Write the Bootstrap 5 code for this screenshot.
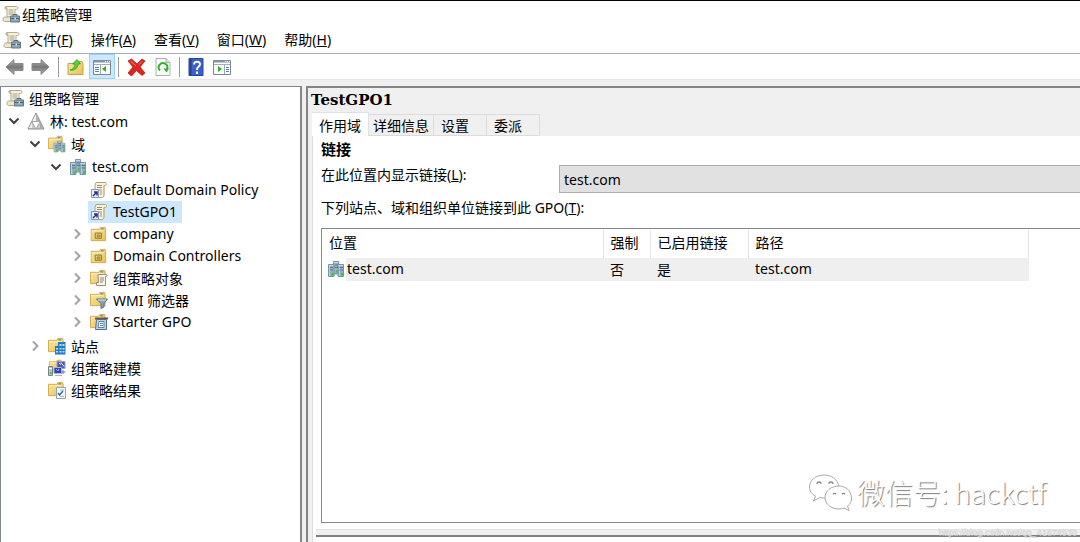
<!DOCTYPE html>
<html lang="zh-CN">
<head>
<meta charset="utf-8">
<meta name="viewport" content="width=device-width, initial-scale=1">
<title>组策略管理</title>
<link href="https://cdn.jsdelivr.net/npm/bootstrap@5.3.0/dist/css/bootstrap.min.css" rel="stylesheet">
<style>
  body { font-family: "Noto Sans", "Noto Sans CJK SC", sans-serif; font-size: 14px; line-height: 22px; color: #000; background: #f0f0f0; }
  .han { font-size: 14px; font-family: "Noto Sans CJK SC", sans-serif; }
  svg { display: block; flex: none; }
  .titlebar { border-top: 1px solid #000; height: 26px; padding-left: 2px; gap: 2px; }
  .menubar { height: 27px; padding-left: 3px; }
  .menubar .btn, .tools .btn, .twist { border: 0; border-radius: 0; padding: 0; color: #000; background: none; font-size: inherit; line-height: inherit; }
  .menubar .menus { gap: 18px; margin-left: 8px; }
  .tools { height: 27px; border-top: 1px solid #a3abb8; border-bottom: 1px solid #e6e6e6; padding-left: 5px; gap: 8px; }
  .tools .btn.pressed { background: #cce8ff; border: 1px solid #99d1ff; width: 26px; height: 25px; display: grid; place-items: center; }
  .toolset { gap: 5px; }
  .toolset.tight { gap: 3px; }
  .toolset.loose { gap: 9px; }
  .sep { width: 1px; height: 20px; background: #999; }
  .workspace { padding-top: 6px; }
  .treepane { flex: 0 0 302px; background: #fff; border: 1px solid #828790; border-width: 1px 2px 0 1px; padding-left: 5px; }
  .treepane ul { list-style: none; margin: 0; padding: 0; }
  .treepane ul ul { padding: 1px 0; }
  .treepane ul ul ul { margin-left: 21px; }
  .treerow { height: 22px; }
  .twist { flex: 0 0 21px; height: 22px; padding-left: 2px; }
  .node { height: 22px; gap: 5px; padding-right: 5px; color: #000; text-decoration: none; white-space: nowrap; }
  .node.chosen { background: #cce8ff; margin-left: -2px; padding-left: 2px; }
  .detail { margin-left: 4px; border: 2px solid #848484; border-width: 2px 0 0 2px; padding-left: 4px; }
  .gpo-name { font: bold 15px/24px "DejaVu Serif", serif; margin: 0 0 0 -1px; }
  .gpotabs { border: 0; align-items: flex-end; }
  .gpotabs .nav-link { border: 1px solid #dcdcdc; border-left: 0; border-radius: 0; background: #f0f0f0; color: #000; padding: 0 4px; height: 22px; line-height: 20px; min-width: 53px; text-align: left; margin: 0; }
  .gpotabs .nav-link.short { padding: 0 7px; }
  .gpotabs .nav-link.active { background: #fff; height: 24px; color: #000; border-bottom: 0; padding: 0 7px; }
  .page { background: #fff; border-left: 1px solid #dcdcdc; padding: 2px 0 6px 8px; }
  .page h2 { font-size: 15px; line-height: 22px; margin: 0; font-weight: 700; }
  .where { width: 238px; height: 28px; line-height: 28px; }
  .form-select.pick { background: #e1e1e1; border: 1px solid #adadad; border-right: 0; border-radius: 0; color: #000; height: 28px; padding: 0 4px; font-size: 14px; margin-top: 5px; }
  .caption-line { padding: 3px 0 9px; }
  .linkbox { border: 1px solid #828790; border-right: 0; }
  .links { width: 707px; table-layout: fixed; margin: 1px 0 0; color: #000; --bs-table-bg: transparent; }
  .links th, .links td { padding: 0 0 0 7px; border: 0; font-weight: 400; }
  .links th { height: 28px; border-right: 1px solid #e5e5e5; line-height: 22px; padding-bottom: 4px; vertical-align: middle; }
  .links td { height: 23px; background: #efefef; line-height: 22px; }
  .links td:first-child { padding-left: 5px; background: linear-gradient(90deg, #fff 24px, #efefef 24px); }
  .sitecell { gap: 2px; }
  .splitter { height: 13px; background: #fff; border-left: 1px solid #dcdcdc; }
  .splitter i { display: block; height: 8px; background: #f0f0f0; border-top: 1px solid #e3e3e3; border-bottom: 2px solid #808080; margin-left: 3px; }
  .wechat { position: absolute; right: 34px; bottom: 30px; gap: 5px; color: #fff; font: 300 28px/40px "Noto Sans CJK SC", sans-serif; text-shadow: 1px 1px 1px #777; pointer-events: none; }
  .source { position: absolute; right: 4px; bottom: 2px; font: 9px/16px "Liberation Sans", sans-serif; color: #ddd; text-shadow: 1px 1px 0 #d0d0d0; pointer-events: none; }
</style>
</head>
<body>
<svg width="0" height="0" class="position-absolute" aria-hidden="true">
  <defs>
    <linearGradient id="gGold" x1="0" y1="0" x2="1" y2="1"><stop offset="0" stop-color="#fce9a3"/><stop offset="1" stop-color="#e9bf55"/></linearGradient>
    <linearGradient id="gGrey" x1="0" y1="0" x2="0" y2="1"><stop offset="0" stop-color="#b5b5b5"/><stop offset=".5" stop-color="#777"/><stop offset="1" stop-color="#b0b0b0"/></linearGradient>
    <symbol id="scroll" viewBox="0 0 18 18">
      <path d="M4 1.500h10.500c2 0 2 3 0 3h-1.500V12H5V4z" fill="#f7f1dc" stroke="#b5aa90"/>
      <path d="M4 1.500C2.500 2 2.500 4.500 5 4.500" fill="#d9cca8" stroke="#a79a7c"/>
      <path d="M6.500 5h5M6.500 7h5M6.500 9h5" stroke="#a39e8d"/>
      <path d="M2.500 12H11v4.500H2.500c-2 0-2-4.500 0-4.500z" fill="#efe6cb" stroke="#b5aa90"/>
    </symbol>
    <symbol id="gpm" viewBox="0 0 18 18">
      <use href="#scroll"/>
      <path d="M11 11V9.500h4V11" fill="none" stroke="#566978"/>
      <path d="M8.500 11h9v6h-9z" fill="#8fa5b5" stroke="#61788a"/><path d="M9 13.500h8" stroke="#4c6272"/><path d="M12.500 12.500h1.500v2h-1.500z" fill="#d7e2e9"/>
    </symbol>
    <symbol id="gpolink" viewBox="0 0 18 18">
      <path d="M6 1.500h9c2 0 2 3 0 3h-1V14c0 1.500-1 2.500-2 2.500H5V4z" fill="#faf4df" stroke="#b0a279"/>
      <path d="M14 4.500V14" stroke="#cdbf94"/><path d="M7 4.500h5M7 6.500h5M9 9h3M10 11h2M10 13h2" stroke="#948c75"/>
      <path d="M1.500 8.500h7v8h-7z" fill="#eef0fb" stroke="#8d91b8"/><path d="M3 15l3.500-3.500M4 11h3v3.500" fill="none" stroke="#24308e" stroke-width="1.500"/>
    </symbol>
    <symbol id="forest" viewBox="0 0 18 18">
      <path d="M9 1l8 16H1z" fill="#c9c9c9" stroke="#8f8f8f"/><path d="M9 2.500V9H5.500z" fill="#f4f4f4"/><path d="M9 2.500L12.500 9H9z" fill="#b0b0b0"/>
      <path d="M5 9.500h8L9 17z" fill="#fff" stroke="#999" stroke-width=".8"/><path d="M5 10.500v5.500H2z" fill="#efefef"/><path d="M13 10.500l3 5.500h-3z" fill="#aaa"/>
    </symbol>
    <symbol id="folder" viewBox="0 0 18 18">
      <path d="M.5 3.500h9l1-2h5l.5 2v12H.5z" fill="url(#gGold)" stroke="#d3a84a"/><path d="M11 3h3" stroke="#6f8eaa" stroke-width="1.500"/><path d="M1.500 5h13" stroke="#fff3c5"/>
    </symbol>
    <symbol id="servers" viewBox="0 0 18 18">
      <g stroke="#7893a6" fill="#94b1c5"><path d="M6.500 1.500h5V14h-5z"/><path d="M1.500 4.500H7v12H1.500z"/><path d="M11 4.500h5.500v12H11z"/></g>
      <path d="M2 5.500h4M11.500 5.500H16M7 2.500h4" stroke="#c5dae6"/>
      <path d="M2.500 5v11M12.500 5v11" stroke="#b8d0df"/>
      <path d="M3 7.500h3M3 10h3M12.500 7.500H16M12.500 10H16M8 5h3M8 7.500h3" stroke="#57758a"/>
      <path d="M4.500 13h2v2.500h-2zM14 13h2v2.500h-2zM9 10.500h1.500v2H9z" fill="#30ca26"/>
    </symbol>
    <symbol id="domains" viewBox="0 0 18 18"><use href="#folder" width="16" height="16"/><use href="#servers" x="5" y="5" width="13" height="13"/></symbol>
    <symbol id="ou" viewBox="0 0 18 18"><use href="#folder"/><path d="M5 7.500h6.500v5.500H5z" fill="#efd37c" stroke="#8d7028"/><path d="M7 9.500h3v2H7z" fill="#e2bd59" stroke="#8d7028" stroke-width=".8"/></symbol>
    <symbol id="gpofolder" viewBox="0 0 18 18"><use href="#folder" width="17" height="17"/><path d="M8 5.500h8c1.500 0 1.500 2 0 2h-.5V16.500H6.500v-3h2z" fill="#f8f4e5" stroke="#9c917a"/><path d="M10 9h4M10 11h4M10 13h3" stroke="#8d8877"/></symbol>
    <symbol id="wmi" viewBox="0 0 18 18"><use href="#folder" width="17" height="17"/><path d="M6.500 8h11L14 12.500V16l-3 1.500v-5z" fill="#8ba5b7" stroke="#587285"/><path d="M8 9h8" stroke="#dbe7ef"/></symbol>
    <symbol id="starter" viewBox="0 0 18 18"><use href="#folder" width="17" height="17"/><path d="M5 5.500h13" stroke="#7b4937" stroke-width="2"/><path d="M6.500 6.500h10v10H5.500z" fill="#b8d5ed" stroke="#50728f"/><path d="M9 8.500h5v6H8z" fill="#f5fafd" stroke="#67839b"/><path d="M10 10.500h3M10 12.500h3" stroke="#5687ae"/></symbol>
    <symbol id="sites" viewBox="0 0 18 18"><use href="#folder" width="17" height="17"/><path d="M10 5h7.500v12.500H7V9h3z" fill="#1d7cc4"/><path d="M11.500 7h2v2h-2zM14.500 7h2v2h-2zM8 11h2v1.500H8zM11.500 11h2v1.500h-2zM14.500 11h2v1.500h-2zM8 14h2v1.500H8zM11.500 14h2v1.500h-2zM14.500 14h2v1.500h-2z" fill="#b9e3fa"/></symbol>
    <symbol id="modeling" viewBox="0 0 18 18"><use href="#folder" x="1" width="14" height="14"/><path d="M9 2.500h8v7H9z" fill="#4856be" stroke="#9ba1b8"/><path d="M11 4l2 1.500M13 3.500l3 4" stroke="#fff"/><path d="M.5 7.500h4v9h-4z" fill="#bdc5c9" stroke="#788187"/><path d="M1 9.500h3" stroke="#fff"/><path d="M2 13h1.500v2H2z" fill="#28c62c"/><path d="M6 8.500h7.500v6H6z" fill="#2941bd" stroke="#b0b5c5"/><path d="M8 10l2 2 1-2M7 16.500h7" stroke="#a8b4d6" fill="none"/><path d="M15 11v4M13.500 13h4" stroke="#687699"/></symbol>
    <symbol id="results" viewBox="0 0 18 18"><use href="#folder" width="17" height="17"/><path d="M8.500 6.500h9v11h-9z" fill="#f7fafc" stroke="#92a1ad"/><path d="M12 9h4M12 15.500h4" stroke="#a4b2bf"/><path d="M10 12l1.500 2 3.500-4" fill="none" stroke="#2f6eb0" stroke-width="1.500"/></symbol>
    <symbol id="down" viewBox="0 0 12 12"><path d="M1.500 3.500L6 8l4.500-4.500" fill="none" stroke="#404040" stroke-width="2"/></symbol>
    <symbol id="right" viewBox="0 0 12 12"><path d="M4 1.500L8.500 6 4 10.500" fill="none" stroke="#a3a3a3" stroke-width="2"/></symbol>
    <symbol id="arrow" viewBox="0 0 20 18"><path d="M1 9l8-7.500V5.500h9v7H9v4z" fill="url(#gGrey)" stroke="#8b8b8b"/></symbol>
    <symbol id="panel" viewBox="0 0 18 16"><path d="M.5 1.500h17v14H.5z" fill="#fafcfd" stroke="#7b8792"/><path d="M1 2.500h16" stroke="#8696a5" stroke-width="2"/><path d="M12 2.500h1M14 2.500h1M16 2.500h1" stroke="#fff"/><path d="M1 5.500h16" stroke="#a4afb9"/></symbol>
  </defs>
</svg>

<div class="d-flex flex-column vh-100 overflow-hidden position-relative">
  <header class="bg-white">
    <div class="titlebar d-flex align-items-center"><svg width="18" height="18"><use href="#gpm"/></svg><span class="han">组策略管理</span></div>
    <nav class="menubar d-flex align-items-center" aria-label="菜单">
      <svg width="18" height="18"><use href="#gpm"/></svg>
      <div class="menus d-flex">
        <button class="btn" type="button"><span class="han">文件</span>(<u>F</u>)</button>
        <button class="btn" type="button"><span class="han">操作</span>(<u>A</u>)</button>
        <button class="btn" type="button"><span class="han">查看</span>(<u>V</u>)</button>
        <button class="btn" type="button"><span class="han">窗口</span>(<u>W</u>)</button>
        <button class="btn" type="button"><span class="han">帮助</span>(<u>H</u>)</button>
      </div>
    </nav>
    <div class="tools d-flex align-items-center" role="toolbar" aria-label="工具栏">
      <div class="toolset d-flex align-items-center">
        <button class="btn" type="button" aria-label="后退"><svg width="20" height="18"><use href="#arrow"/></svg></button>
        <button class="btn" type="button" aria-label="前进"><svg width="20" height="18" viewBox="0 0 20 18"><path d="M19 9l-8-7.500V5.500H2v7h9v4z" fill="url(#gGrey)" stroke="#8b8b8b"/></svg></button>
      </div>
      <span class="sep"></span>
      <div class="toolset d-flex align-items-center">
        <button class="btn" type="button" aria-label="上移一级"><svg width="17" height="18" viewBox="0 0 16 18"><path d="M.5 5.500h8l1-2h5l1 2v11H.5z" fill="url(#gGold)" stroke="#c8a047"/><path d="M2.500 12C5 11.500 7 10 7.500 6H5l4.500-4.500L13 6h-2.500c0 4-3.500 7-8 6z" fill="#54d53b" stroke="#2c9e20" stroke-width=".8"/></svg></button>
        <div class="toolset tight d-flex align-items-center">
          <button class="btn pressed" type="button" aria-label="控制台树"><svg width="18" height="16" viewBox="0 0 18 16"><use href="#panel"/><path d="M7.500 6v9" stroke="#9ba8b3"/><path d="M2 8.500h4M2 10.500h4M2 12.500h4" stroke="#5b7fae"/><path d="M13 7v6l-4-3z" fill="#35ad24"/></svg></button>
          <span class="sep"></span>
        </div>
      </div>
      <div class="toolset loose d-flex align-items-center">
        <button class="btn" type="button" aria-label="删除"><svg width="19" height="18" viewBox="0 0 19 18"><path d="M1 3l3.500-2L10 6l5-5 3 2-5 6 5 6-3 2.500-5.500-5-5 5.500L1 15l5-6z" fill="#e2241f" stroke="#b91813" stroke-width=".8"/><path d="M3.500 3L9 8M15 3.500l-3 3" stroke="#ff817b"/></svg></button>
        <button class="btn" type="button" aria-label="刷新"><svg width="16" height="18" viewBox="0 0 16 18"><path d="M1 .5h10l4 4v13H1z" fill="#f8fafa" stroke="#a9b1b6"/><path d="M11 .5v4h4" fill="#dce2e5" stroke="#a9b1b6"/><path d="M5 12.500A4.300 4.300 0 1 1 12 11" fill="none" stroke="#32b32c" stroke-width="2"/><path d="M8.500 10.500H14l-2.500 4z" fill="#32b32c"/></svg></button>
      </div>
      <span class="sep"></span>
      <div class="toolset loose d-flex align-items-center">
        <button class="btn" type="button" aria-label="帮助"><svg width="16" height="18" viewBox="0 0 15 18"><path d="M.5.500h14v17H.5z" fill="#3b62c4" stroke="#2547a0"/><path d="M1 1h2v16H1z" fill="#243f92"/><path d="M5.500 6.500C5.500 2.500 12 3 11.500 6.500 11 9 8.500 8.500 8.500 12M8.500 13.500V16" fill="none" stroke="#fff" stroke-width="1.900"/></svg></button>
        <button class="btn" type="button" aria-label="操作窗格"><svg width="18" height="16" viewBox="0 0 18 16"><use href="#panel"/><path d="M11.500 6v9" stroke="#9ba8b3"/><path d="M13 8.500h3M13 10.500h3M13 12.500h3" stroke="#5b7fae"/><path d="M5 7v6l4-3z" fill="#35ad24"/></svg></button>
      </div>
    </div>
  </header>

  <main class="workspace d-flex flex-grow-1">
    <nav class="treepane" aria-label="控制台树">
      <ul>
        <li><div class="treerow d-flex"><a class="node d-flex align-items-center" href="#root"><svg width="18" height="18"><use href="#gpm"/></svg><span class="han">组策略管理</span></a></div>
          <ul>
            <li><div class="treerow d-flex"><button class="twist" type="button" aria-label="折叠"><svg width="12" height="12"><use href="#down"/></svg></button><a class="node d-flex align-items-center" href="#forest-node"><svg width="18" height="18"><use href="#forest"/></svg><span><span class="han">林</span>: test.com</span></a></div>
              <ul>
                <li><div class="treerow d-flex"><button class="twist" type="button" aria-label="折叠"><svg width="12" height="12"><use href="#down"/></svg></button><a class="node d-flex align-items-center" href="#d"><svg width="18" height="18"><use href="#domains"/></svg><span class="han">域</span></a></div>
                  <ul>
                    <li><div class="treerow d-flex"><button class="twist" type="button" aria-label="折叠"><svg width="12" height="12"><use href="#down"/></svg></button><a class="node d-flex align-items-center" href="#t"><svg width="18" height="18"><use href="#servers"/></svg><span>test.com</span></a></div>
                      <ul>
                        <li class="treerow d-flex"><span class="twist"></span><a class="node d-flex align-items-center" href="#ddp"><svg width="18" height="18"><use href="#gpolink"/></svg>Default Domain Policy</a></li>
                        <li class="treerow d-flex"><span class="twist"></span><a class="node chosen d-flex align-items-center" href="#gpo1" aria-current="true"><svg width="18" height="18"><use href="#gpolink"/></svg>TestGPO1</a></li>
                        <li class="treerow d-flex"><button class="twist" type="button" aria-label="展开"><svg width="12" height="12"><use href="#right"/></svg></button><a class="node d-flex align-items-center" href="#company"><svg width="18" height="17"><use href="#ou"/></svg>company</a></li>
                        <li class="treerow d-flex"><button class="twist" type="button" aria-label="展开"><svg width="12" height="12"><use href="#right"/></svg></button><a class="node d-flex align-items-center" href="#dc"><svg width="18" height="17"><use href="#ou"/></svg>Domain Controllers</a></li>
                        <li class="treerow d-flex"><button class="twist" type="button" aria-label="展开"><svg width="12" height="12"><use href="#right"/></svg></button><a class="node d-flex align-items-center" href="#objects"><svg width="18" height="18"><use href="#gpofolder"/></svg><span class="han">组策略对象</span></a></li>
                        <li class="treerow d-flex"><button class="twist" type="button" aria-label="展开"><svg width="12" height="12"><use href="#right"/></svg></button><a class="node d-flex align-items-center" href="#filters"><svg width="18" height="18"><use href="#wmi"/></svg><span>WMI <span class="han">筛选器</span></span></a></li>
                        <li class="treerow d-flex"><button class="twist" type="button" aria-label="展开"><svg width="12" height="12"><use href="#right"/></svg></button><a class="node d-flex align-items-center" href="#starters"><svg width="18" height="18"><use href="#starter"/></svg>Starter GPO</a></li>
                      </ul>
                    </li>
                  </ul>
                </li>
                <li class="treerow d-flex"><button class="twist" type="button" aria-label="展开"><svg width="12" height="12"><use href="#right"/></svg></button><a class="node d-flex align-items-center" href="#s"><svg width="18" height="18"><use href="#sites"/></svg><span class="han">站点</span></a></li>
                <li class="treerow d-flex"><span class="twist"></span><a class="node d-flex align-items-center" href="#m"><svg width="18" height="18"><use href="#modeling"/></svg><span class="han">组策略建模</span></a></li>
                <li class="treerow d-flex"><span class="twist"></span><a class="node d-flex align-items-center" href="#r"><svg width="18" height="18"><use href="#results"/></svg><span class="han">组策略结果</span></a></li>
              </ul>
            </li>
          </ul>
        </li>
      </ul>
    </nav>

    <section class="detail d-flex flex-column flex-grow-1">
      <h1 class="gpo-name">TestGPO1</h1>
      <div class="nav nav-tabs gpotabs" role="tablist">
        <button class="nav-link active han" type="button" role="tab" aria-selected="true">作用域</button>
        <button class="nav-link han" type="button" role="tab" aria-selected="false">详细信息</button>
        <button class="nav-link short han" type="button" role="tab" aria-selected="false">设置</button>
        <button class="nav-link short han" type="button" role="tab" aria-selected="false">委派</button>
      </div>
      <div class="page d-flex flex-column flex-grow-1">
        <h2 class="han">链接</h2>
        <div class="d-flex">
          <label class="where" for="where"><span class="han">在此位置内显示链接</span>(<u>L</u>):</label>
          <select class="form-select pick flex-grow-1 w-auto" id="where"><option>test.com</option></select>
        </div>
        <div class="caption-line" id="caption"><span class="han">下列站点、域和组织单位链接到此</span> GPO(<u>T</u>):</div>
        <div class="linkbox flex-grow-1">
          <table class="table links" aria-labelledby="caption">
            <colgroup><col style="width:281px"><col style="width:47px"><col style="width:98px"><col></colgroup>
            <thead><tr><th scope="col" class="han">位置</th><th scope="col" class="han">强制</th><th scope="col" class="han">已启用链接</th><th scope="col" class="han">路径</th></tr></thead>
            <tbody><tr><td><span class="sitecell d-flex align-items-center"><svg width="18" height="18"><use href="#servers"/></svg>test.com</span></td><td class="han">否</td><td class="han">是</td><td>test.com</td></tr></tbody>
          </table>
        </div>
      </div>
      <div class="splitter"><i></i></div>
    </section>
  </main>

  <div class="wechat d-flex align-items-center">
    <svg width="44" height="38" viewBox="0 0 44 38"><g fill="#fff" stroke="#aaa" stroke-width="1"><path d="M16 2C8 2 1.500 7 1.500 14c0 4 2 7 6 9l-2 5 6-3.500c2 .5 4 .5 6 .5M31 14C30 6 23 2 16 2"/><path d="M31 13c-8 0-14 5-14 11.500S23 36 31 36c2 0 3-.5 5-1l5 2.500-1.500-4.500c3-2 4.500-5 4-8.500C43 18 38 13 31 13z"/></g><path d="M9 11a2 2 0 0 1 4 0M21 11a2 2 0 0 1 4 0M25 21a2 2 0 0 1 3 0M34 21a2 2 0 0 1 3 0" fill="none" stroke="#888" stroke-width="1.300"/></svg>
    <span>微信号: hackctf</span>
  </div>
  <div class="source">https://blog.csdn.net/qq_41874930</div>
</div>
<script src="https://cdn.jsdelivr.net/npm/bootstrap@5.3.0/dist/js/bootstrap.bundle.min.js"></script>
</body>
</html>
